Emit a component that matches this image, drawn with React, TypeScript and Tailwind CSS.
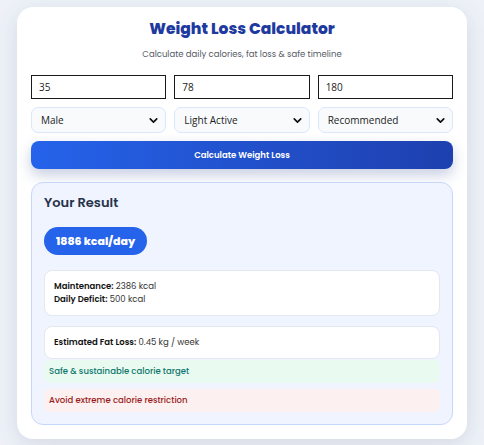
import { ChevronDown } from "lucide-react";

const SELECTS = ["Male", "Light Active", "Recommended"];
const INPUTS = ["35", "78", "180"];

export default function App() {
  return (
    <div className="min-h-[445px] w-full bg-[#eef2f8] px-[17px] pt-[7px] pb-[7px] font-['Poppins','Inter',sans-serif]">
      <div className="rounded-[16px] bg-white px-[14px] pt-[10px] pb-[14px] shadow-[0_6px_24px_rgba(30,41,80,0.12)]">
        <h1 className="text-center text-[15.5px] font-extrabold leading-[24px] text-[#1e3a9f]">
          Weight Loss Calculator
        </h1>
        <p className="mt-[6px] text-center text-[8.5px] leading-[14px] text-[#555b66]">
          Calculate daily calories, fat loss &amp; safe timeline
        </p>

        <div className="mt-[14px] grid grid-cols-3 gap-[8px]">
          {INPUTS.map((v) => (
            <div
              key={v}
              className="flex h-[24px] items-center border-[1.5px] border-[#1a1a1a] px-[7px] font-['Open_Sans',sans-serif] text-[10px] text-[#222]"
            >
              {v}
            </div>
          ))}
        </div>

        <div className="mt-[8px] grid grid-cols-3 gap-[8px]">
          {SELECTS.map((s) => (
            <div
              key={s}
              className="flex h-[26px] items-center justify-between rounded-[7px] border border-[#dbe7fb] bg-[#f8fafc] pl-[9px] pr-[5px] font-['Open_Sans',sans-serif] text-[10px] text-[#222]"
            >
              <span>{s}</span>
              <ChevronDown size={13} strokeWidth={3.2} className="text-[#111]" />
            </div>
          ))}
        </div>

        <button className="mt-[8px] flex h-[28px] w-full items-center justify-center rounded-[8px] bg-gradient-to-r from-[#2563eb] to-[#1e40af] text-[8.5px] font-semibold text-white shadow-[0_6px_14px_rgba(30,58,138,0.25)]">
          Calculate Weight Loss
        </button>

        <div className="mt-[13px] rounded-[12px] border border-[#c7d6fb] bg-[#eff4ff] px-[12px] pt-[11px] pb-[12px]">
          <h2 className="text-[13px] font-semibold leading-[18px] text-[#27324a]">Your Result</h2>
          <div className="mt-[15px] inline-flex h-[28px] items-center rounded-full bg-[#2563eb] px-[12px] text-[11px] font-extrabold text-white">
            1886 kcal/day
          </div>

          <div className="mt-[15px] rounded-[8px] border border-[#e3e7ee] bg-white px-[9px] py-[9px] text-[8.5px] leading-[13px] text-[#333]">
            <div>
              <b className="font-semibold text-[#111]">Maintenance:</b> 2386 kcal
            </div>
            <div>
              <b className="font-semibold text-[#111]">Daily Deficit:</b> 500 kcal
            </div>
          </div>

          <div className="mt-[10px] rounded-[8px] border border-[#e3e7ee] bg-white px-[9px] py-[9px] text-[8.5px] leading-[13px] text-[#333]">
            <b className="font-semibold text-[#111]">Estimated Fat Loss:</b> 0.45 kg / week
          </div>

          <div className="mt-[1px] rounded-[6px] bg-[#e9fbf1] px-[5px] py-[5px] text-[8.5px] font-medium leading-[13px] text-[#0f766e]">
            Safe &amp; sustainable calorie target
          </div>
          <div className="mt-[6px] rounded-[6px] bg-[#fdf0f0] px-[5px] py-[5px] text-[8.5px] font-medium leading-[13px] text-[#991b1b]">
            Avoid extreme calorie restriction
          </div>
        </div>
      </div>
    </div>
  );
}
